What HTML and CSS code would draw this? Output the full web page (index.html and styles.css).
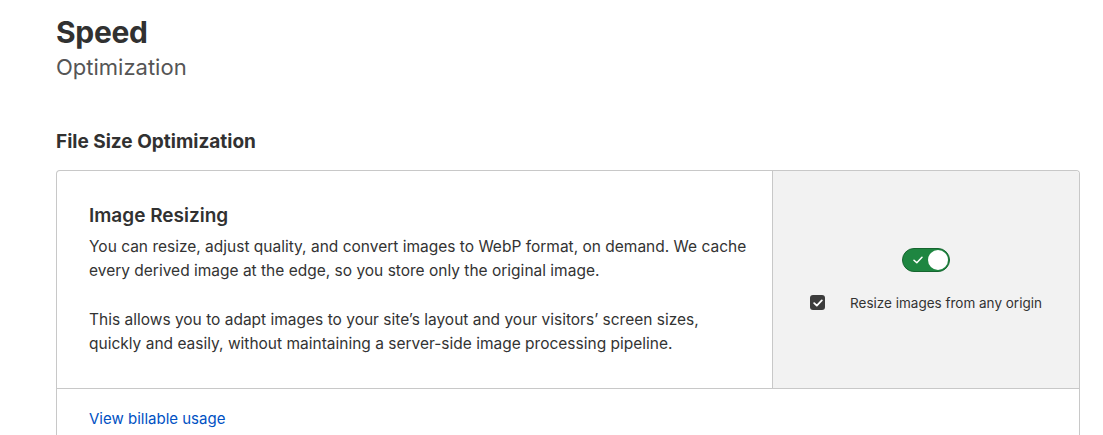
FILE: index.html
```html
<!DOCTYPE html>
<html>
<head>
<meta charset="utf-8">
<link rel="stylesheet" href="styles.css">
</head>
<body>
<div class="page">
  <header class="page-head">
    <h1 class="title">Speed</h1>
    <div class="subtitle">Optimization</div>
  </header>
  <h2 class="section-title">File Size Optimization</h2>
  <div class="card">
    <div class="card-main">
      <div class="card-body">
        <h3 class="card-title">Image Resizing</h3>
        <p class="text">You can resize, adjust quality, and convert images to WebP format, on demand. We cache every derived image at the edge, so you store only the original image.</p>
        <p class="text">This allows you to adapt images to your site’s layout and your visitors’ screen sizes, quickly and easily, without maintaining a server-side image processing pipeline.</p>
      </div>
      <div class="card-side">
        <div class="toggle">
          <svg class="toggle-check" width="10" height="8" viewBox="0 0 10 8"><path d="M1 4.2 L3.8 6.8 L9 1.2" fill="none" stroke="#fff" stroke-width="1.5" stroke-linecap="round" stroke-linejoin="round"/></svg>
          <span class="knob"></span>
        </div>
        <label class="check-row">
          <span class="checkbox"><svg width="10" height="8" viewBox="0 0 10 8"><path d="M1.2 4.2 L3.8 6.6 L8.8 1.4" fill="none" stroke="#fff" stroke-width="1.8" stroke-linecap="round" stroke-linejoin="round"/></svg></span>
          <span class="check-label">Resize images from any origin</span>
        </label>
      </div>
    </div>
    <div class="card-foot">
      <a class="link" href="#">View billable usage</a>
    </div>
  </div>
</div>
</body>
</html>
```
FILE: styles.css
```css
* { box-sizing: border-box; }
html, body { margin: 0; padding: 0; background: #fff; }
body {
  font-family: Inter, "Liberation Sans", Arial, sans-serif;
  color: #333;
}
.page {
  padding: 14px 23px 0 56px;
}
.title {
  margin: 0;
  font-size: 30px;
  line-height: 36px;
  font-weight: 700;
  color: #313131;
  letter-spacing: -0.3px;
}
.subtitle {
  font-size: 22px;
  line-height: 32px;
  color: #555;
  margin-top: 1px;
}
.section-title {
  margin: 47px 0 0;
  font-size: 19px;
  line-height: 24px;
  font-weight: 700;
  color: #313131;
}
.card {
  margin-top: 16px;
  border: 1px solid #c8c8c8;
  border-radius: 4px 4px 0 0;
  border-bottom: none;
}
.card-main {
  display: flex;
  border-bottom: 1px solid #c8c8c8;
}
.card-body {
  flex: 1;
  padding: 32px 16px 32px 32px;
}
.card-title {
  margin: 0 0 6px;
  font-size: 19px;
  line-height: 26px;
  font-weight: 600;
  color: #313131;
}
.text {
  max-width: 662px;
  margin: 0 0 25px;
  font-size: 15.5px;
  line-height: 24px;
  color: #333;
}
.text:last-child { margin-bottom: 0; }
.card-side {
  width: 307px;
  background: #f2f2f2;
  border-left: 1px solid #c8c8c8;
  border-top-right-radius: 3px;
  display: flex;
  flex-direction: column;
  align-items: center;
  justify-content: center;
}
.toggle {
  width: 48px;
  height: 24px;
  border-radius: 12px;
  background: #1e8641;
  border: 1px solid #16652f;
  display: flex;
  align-items: center;
  justify-content: space-between;
  padding: 0 1px 0 10px;
}
.toggle-check { display: block; }
.knob {
  width: 20px;
  height: 20px;
  border-radius: 50%;
  background: #fff;
}
.check-row {
  display: flex;
  align-items: center;
  margin-top: 22px;
}
.checkbox {
  width: 15px;
  height: 15px;
  border-radius: 3px;
  background: #3c3c3c;
  display: flex;
  align-items: center;
  justify-content: center;
  margin-right: 25px;
}
.checkbox svg { display: block; }
.check-label {
  font-size: 13.5px;
  line-height: 18px;
  color: #333;
}
.card-foot {
  padding: 19px 32px 20px;
}
.link {
  font-size: 15px;
  line-height: 20px;
  color: #0051c3;
  text-decoration: none;
}
```
